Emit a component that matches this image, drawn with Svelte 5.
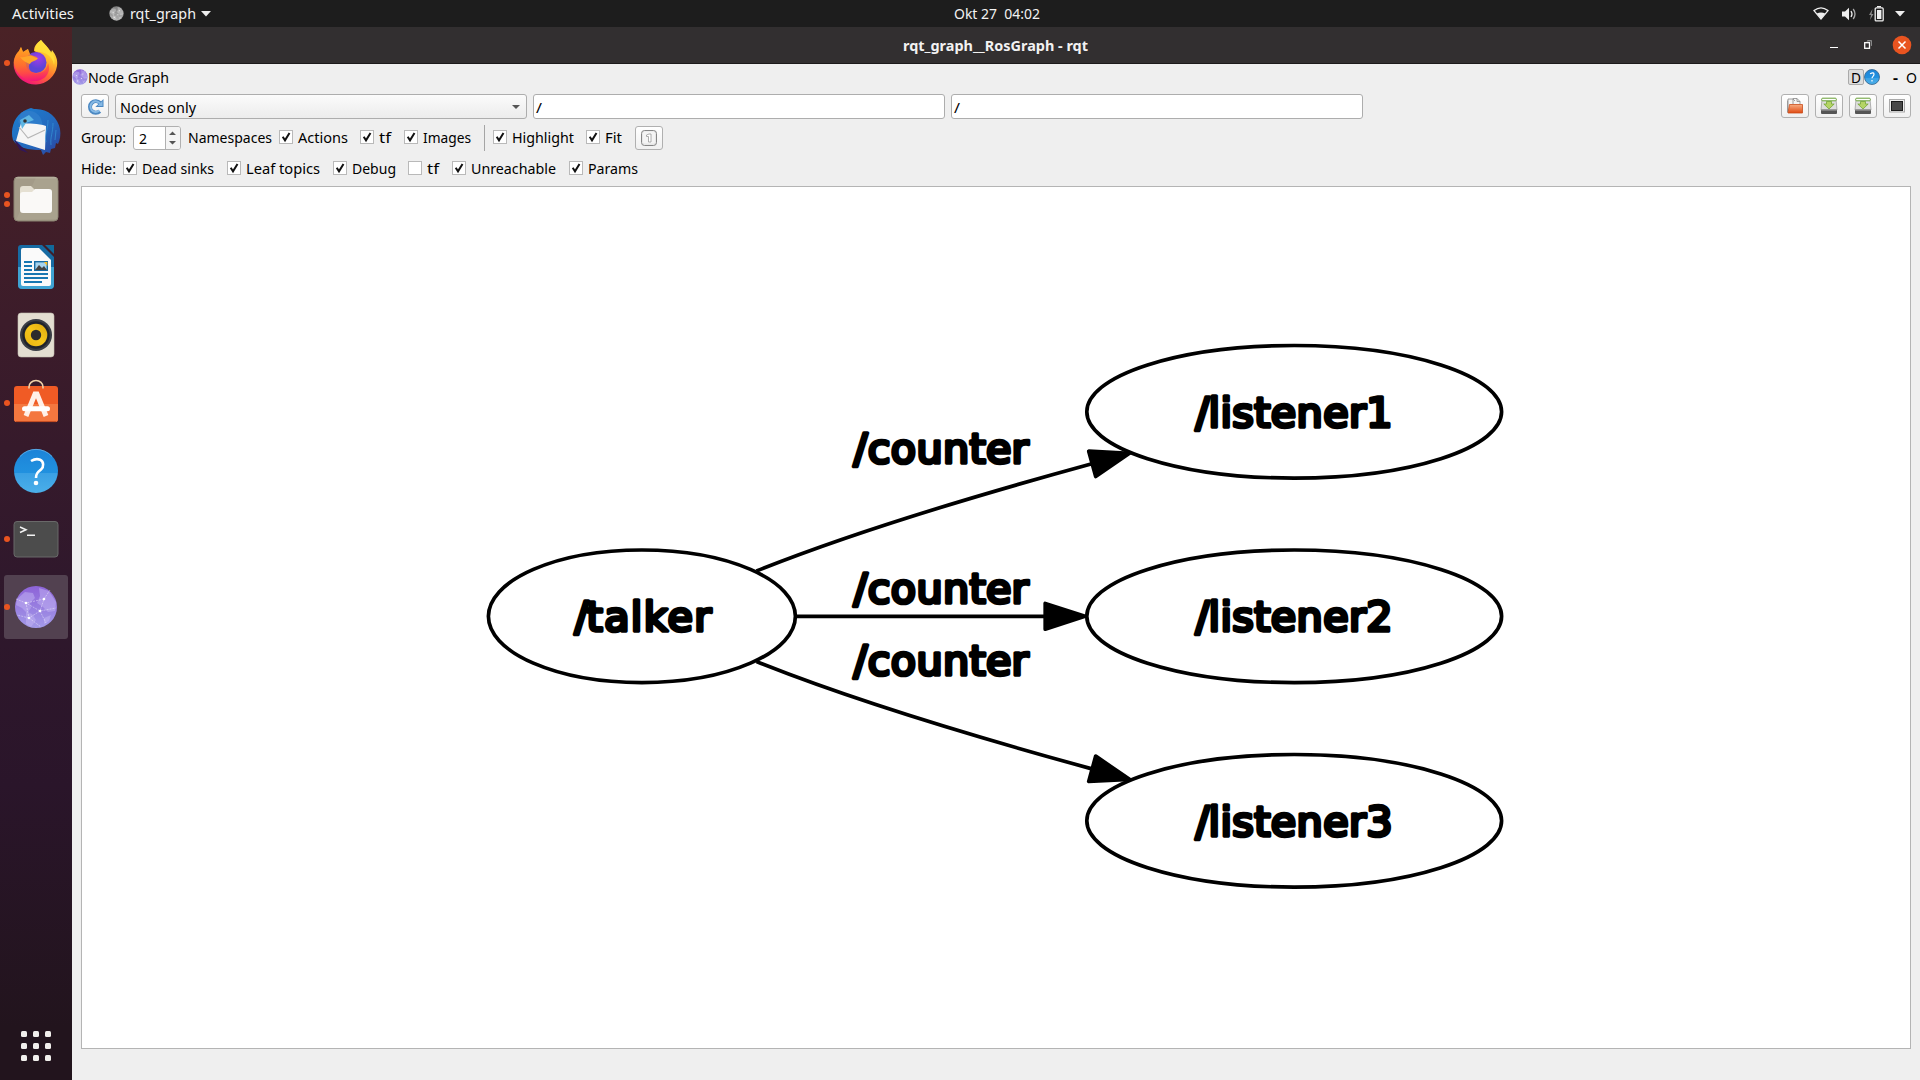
<script>
  const groupRow = [
    { w: 50, label: 'Actions', on: true },
    { w: 12, label: 'tf', on: true },
    { w: 48, label: 'Images', on: true }
  ];
  const viewRow = [
    { w: 62, label: 'Highlight', on: true },
    { w: 17, label: 'Fit', on: true }
  ];
  const hideRow = [
    { w: 72, label: 'Dead sinks', on: true },
    { w: 74, label: 'Leaf topics', on: true },
    { w: 44, label: 'Debug', on: true },
    { w: 12, label: 'tf', on: false },
    { w: 85, label: 'Unreachable', on: true },
    { w: 50, label: 'Params', on: true }
  ];
  const dock = [
    { id: 'firefox', dots: 1 },
    { id: 'mail', dots: 0 },
    { id: 'files', dots: 2 },
    { id: 'writer', dots: 0 },
    { id: 'music', dots: 0 },
    { id: 'store', dots: 1 },
    { id: 'help', dots: 0 },
    { id: 'terminal', dots: 1 },
    { id: 'rqt', dots: 1, active: true }
  ];
  // Each name starts with a slash that sits tight against the first letter.
  const nodes = [
    { x: 641.9, y: 616.3, rx: 153.5, label: 'talker', slash: 574.6, tx: 586.6, len: 124.6 },
    { x: 1294.2, y: 411.8, rx: 207.4, label: 'listener1', slash: 1195.6, tx: 1208.6, len: 184 },
    { x: 1294.2, y: 616.3, rx: 207.4, label: 'listener2', slash: 1195.6, tx: 1208.6, len: 184 },
    { x: 1294.2, y: 820.8, rx: 207.4, label: 'listener3', slash: 1195.6, tx: 1208.6, len: 184 }
  ];
  const topics = [463, 603, 675];
</script>

{#snippet txt(label, w, extra = '')}
  <svg class="txt {extra}" width={w} height="20"><text x="0" y="15" textLength={w} lengthAdjust="spacingAndGlyphs">{label}</text></svg>
{/snippet}

{#snippet check(c)}
  <label class="check">
    <svg class="box" width="14" height="14"><rect x=".5" y=".5" width="13" height="13" fill="#fff" stroke="#b9b9b9" />{#if c.on}<path d="M3.7 6.8 L6 10.3 L10.5 3" fill="none" stroke="#111" stroke-width="2" />{/if}</svg>
    {@render txt(c.label, c.w)}
  </label>
{/snippet}

{#snippet globe(size, gray)}
  <svg width={size} height={size} viewBox="0 0 44 44" class:gray>
    <circle cx="22" cy="22" r="21" fill="url(#globe)" />
    <path d="M3 14l8-7 8 1 2 5-5 5 1 5-4 5-5-5-6-3zM25 3l10 3 7 11-1 9-7 1-5-5-6-4 3-7zM12 27l6 2 4 6-5 7-5-3zM30 33l7-3-2 6-5 3z" fill="#c4b6f4" opacity=".5" />
    <path d="M2 14L12 18 30 14 26 26 15 33 12 18 26 26 42 23M30 14L36 5M15 33L27 42M15 33L3 30M26 26L32 38" fill="none" stroke="#fff" stroke-width=".8" stroke-dasharray="2 1" opacity=".5" />
    <g fill="#fff"><circle cx="12" cy="18" r="1.3" /><circle cx="30" cy="14" r="1.3" /><circle cx="26" cy="26" r="1.3" /><circle cx="15" cy="33" r="1.3" /></g>
  </svg>
{/snippet}

{#snippet save()}
  <svg width="18" height="18" viewBox="0 0 18 18">
    <path d="M2 2h14l1 11H1z" fill="#dedede" stroke="#888" stroke-width=".6" />
    <rect x="1" y="12.5" width="16" height="4.5" rx="1" fill="#555" /><path d="M1.5 13h15" stroke="#aaa" />
    <rect x="1.7" y="1.2" width="14.6" height="2.6" rx="1" fill="#fff" stroke="#69a336" />
    <path d="M6.5 4.5h5V7h2.7L9 12 3.8 7h2.7z" fill="#b4d465" stroke="#6c9f2d" stroke-width=".7" />
  </svg>
{/snippet}

<svg class="defs" width="0" height="0">
  <defs>
    <linearGradient id="globe" x2="0" y2="1"><stop stop-color="#8d63d8" /><stop offset="1" stop-color="#a39ae8" /></linearGradient>
    <linearGradient id="ff" x1=".85" y1=".1" x2=".3" y2="1"><stop stop-color="#fff04a" /><stop offset=".3" stop-color="#ffb82b" /><stop offset=".62" stop-color="#ff6a33" /><stop offset="1" stop-color="#f3107c" /></linearGradient>
    <linearGradient id="ffo" x1=".3" x2=".5" y2="1"><stop stop-color="#ffa61e" /><stop offset=".5" stop-color="#ff7529" /><stop offset=".75" stop-color="#ff4a45" /><stop offset="1" stop-color="#f3107c" /></linearGradient>
    <radialGradient id="ffp" cx=".6" cy=".3"><stop stop-color="#a23ce8" /><stop offset="1" stop-color="#5b45d6" /></radialGradient>
    <linearGradient id="tb" x2="1" y2="1"><stop stop-color="#1c7fd0" /><stop offset=".6" stop-color="#2468bd" /><stop offset="1" stop-color="#2c3f9b" /></linearGradient>
    <linearGradient id="blue" x2="0" y2="1"><stop stop-color="#1c83d8" /><stop offset=".54" stop-color="#2191df" /><stop offset=".55" stop-color="#3aa0e4" /><stop offset="1" stop-color="#4bafe9" /></linearGradient>
    <linearGradient id="yellow" x1="1" x2="0" y2="1"><stop stop-color="#dca90c" /><stop offset=".5" stop-color="#f5c61b" /><stop offset="1" stop-color="#e7b411" /></linearGradient>
    <linearGradient id="folder" x2="0" y2="1"><stop stop-color="#f7ad83" /><stop offset="1" stop-color="#e04a12" /></linearGradient>
  </defs>
</svg>

<div class="desktop">
  <header class="panel">
    <div class="left">
      {@render txt('Activities', 62)}
      <span class="app">{@render globe(15, true)}{@render txt('rqt_graph', 66)}<svg width="10" height="6"><path d="M0 0h10L5 5.5z" fill="#eee" /></svg></span>
    </div>
    <div class="clock">{@render txt('Okt 27\u00a0 04:02', 86)}</div>
    <div class="tray">
      <svg width="16" height="13" viewBox="0 0 16 13"><path d="M1 3.6Q8-2 15 3.6L8 12z" fill="none" stroke="#eee" stroke-width="1.3" /><path d="M3.8 6.5Q8 4.5 12.2 6.5L8 12z" fill="#eee" /></svg>
      <svg class="vol" width="15" height="14" viewBox="0 0 15 14"><path d="M0 4.5h3L7 .8v12.4l-4-3.7H0z" fill="#eee" /><path d="M9 4q2 3 0 6" fill="none" stroke="#eee" stroke-width="1.3" /><path d="M11.2 2q3.6 5 0 10" fill="none" stroke="#aaa" stroke-width="1.3" /></svg>
      <svg class="bat" width="15" height="16" viewBox="0 0 15 16"><path d="M3.5 3L0 9h2l-1 5 3.5-6h-2z" fill="#888" /><path d="M8 .5h4" stroke="#eee" stroke-width="1.5" /><rect x="6.2" y="1.9" width="8" height="13" rx="1" fill="none" stroke="#eee" stroke-width="1.3" /><rect x="8" y="4" width="4.4" height="9" fill="#eee" /></svg>
      <svg class="tri" width="10" height="6"><path d="M0 0h10L5 5.5z" fill="#eee" /></svg>
    </div>
  </header>

  <div class="body">
    <nav class="dock">
      {#each dock as d}
        <div class="tile" class:active={d.active}>
          <div class="dots">{#each Array(d.dots) as _}<i></i>{/each}</div>
          {#if d.id === 'firefox'}
            <svg width="48" height="48" viewBox="0 0 48 48">
              <path d="M29 1c2 3 5 5 7 8l3 5 1-3c4 5 6 10 5 16a22 22 0 0 1-43 2C1 22 3 16 7 12l2-4 2 5 5-3 2 5h10l-6-3C22 7 25 4 29 1z" fill="url(#ff)" />
              <circle cx="24" cy="23.5" r="10.5" fill="url(#ffp)" />
              <path d="M2 25C1 20 4 15 7 12l2-4 2 5 5-3c0 3 1 5 3 6l6 2c-1 3-5 3-7 6-4 6 3 12 9 10 6-1 8-5 9-10 4 10-4 18-13 18C12 42 4 35 2 25z" fill="url(#ffo)" opacity=".8" />
              <path d="M8 18c5 1 8-2 12-1 3 1 4 2 6 2-2 4-6 2-8 6-3-1-7-3-10-7z" fill="#ffa629" />
              <path d="M29 1c2 3 5 5 7 8 5 5 8 11 6 17-1-5-3-8-6-10-4-3-8-3-13-4 0-5 2-8 6-11z" fill="#ffdf3a" opacity=".85" />
            </svg>
          {:else if d.id === 'mail'}
            <svg class="mail" width="48" height="48" viewBox="0 0 48 48">
              <path d="M9 5C13 2 16 1 19 0l3 1c13-1 24 8 26 20 1 6 0 11-2 15l-2-1-1 5-4 1-1 4-4-1-3 3-2-5C16 42 6 40 1 32-2 22 2 10 9 5z" fill="url(#tb)" />
              <path d="M9 5C17 0 28 4 30 14c2 8-2 14-4 20L6 14z" fill="#2d7ccb" />
              <path d="M4 33l12 12-8-3-6-10z" fill="#31165a" />
              <path d="M9 15C17 16 26 15 34 18l-1 24L4 33z" fill="#f5f5f5" /><path d="M7 19l9 11 17-8" fill="none" stroke="#b5b5b5" stroke-width="1.1" />
              <path d="M8 12l2 9 4-6 8-3-5-5z" fill="#5eb6e3" /><circle cx="13" cy="13" r="1.8" fill="#333" />
              <path d="M36 12c0 10-4 15-2 22M41 15c0 10-3 14-2 22M44 22l-1 10" stroke="#399ddc" fill="none" opacity=".6" />
            </svg>
          {:else if d.id === 'files'}
            <svg width="48" height="48" viewBox="0 0 48 48"><rect x="2" y="2" width="44" height="44" rx="4" fill="#a39b88" stroke="#8b8473" /><path d="M24 2.5h20a2 2 0 0 1 1.5 1.5v40L4 45z" fill="#aea692" opacity=".6" /><path d="M4 2.8h40" stroke="#c0b9a9" /><path d="M8 14a3 3 0 0 1 3-3h8l4 4h14v8H8z" fill="#e5e0d2" /><path d="M8 20a3 3 0 0 1 3-3h9l3-3h14a3 3 0 0 1 3 3v18a3 3 0 0 1-3 3H11a3 3 0 0 1-3-3z" fill="#faf9f7" /></svg>
          {:else if d.id === 'writer'}
            <svg width="48" height="48" viewBox="0 0 48 48"><path d="M9 2h21l12 12v28a4 4 0 0 1-4 4H10a4 4 0 0 1-4-4V5a3 3 0 0 1 3-3z" fill="#176ba3" /><path d="M6 24h36v18a4 4 0 0 1-4 4H10a4 4 0 0 1-4-4z" fill="#3fa3d3" /><path d="M11 5h16l12 12v24a2 2 0 0 1-2 2H11a2 2 0 0 1-2-2V7a2 2 0 0 1 2-2z" fill="#fafafa" /><path d="M33 2h9v9z" fill="#11699b" /><path d="M12 19h8M12 23h8M12 27h8M12 31h24M12 35h24M12 39h18" stroke="#1777b2" stroke-width="2" /><rect x="22.7" y="18.7" width="12.6" height="8.6" fill="#a7d4ef" stroke="#176ba3" stroke-width="1.4" /><path d="M23 27l4-5 3 3 2-2 3 4z" fill="#444" /><path d="M32 19h3.3v4z" fill="#fdbd20" /></svg>
          {:else if d.id === 'music'}
            <svg width="48" height="48" viewBox="0 0 48 48"><rect x="6" y="2" width="36" height="44" rx="3" fill="#e3ded1" stroke="#c5c0b4" stroke-width=".6" /><circle cx="24" cy="24" r="16" fill="#3a3e45" /><circle cx="24" cy="24" r="13.7" fill="#20242b" /><circle cx="24" cy="24" r="11.3" fill="url(#yellow)" /><circle cx="24" cy="24" r="5.2" fill="#2c2c2c" /></svg>
          {:else if d.id === 'store'}
            <svg class="store" width="48" height="48" viewBox="0 0 48 48"><rect x="2" y="8" width="44" height="36" rx="3" fill="#f05b25" /><path d="M2 26h44v15a3 3 0 0 1-3 3H5a3 3 0 0 1-3-3z" fill="#f4773f" /><path d="M4 43.6h40" stroke="#c14a21" /><path d="M17 10.500V9a7 6.500 0 0 1 14 0v1.500" fill="none" stroke="#f1d2a8" stroke-width="1.600" /><path d="M14 38L23 16h2l9 22" fill="none" stroke="#fff0e8" stroke-width="5" /><path d="M12.500 30.800h23" stroke="#fff" stroke-width="5" stroke-linecap="round" /></svg>
          {:else if d.id === 'help'}
            <svg width="48" height="48" viewBox="0 0 48 48"><circle cx="24" cy="24" r="22" fill="url(#blue)" /><path d="M8 9.500a21.500 21.500 0 0 1 32 0" fill="none" stroke="#66b2ea" stroke-width=".8" /><path d="M19 14q5-3 9-1.300c4 2 4 7 1 9.800-3 2.500-5 4-5 8.500" fill="none" stroke="#fff" stroke-width="2.600" /><circle cx="24" cy="36" r="2.300" fill="#fff" /></svg>
          {:else if d.id === 'terminal'}
            <svg width="48" height="48" viewBox="0 0 48 48"><rect x="2" y="6.500" width="44" height="35.500" rx="3" fill="#4c4c4c" stroke="#696969" /><path d="M8 12l6 2.800L8 17.500M15 20.300h8" fill="none" stroke="#f3f3f3" stroke-width="1.500" /></svg>
          {:else}
            {@render globe(44, false)}
          {/if}
        </div>
      {/each}
      <svg class="grid" width="30" height="30">
        {#each [0, 12, 24] as y}{#each [0, 12, 24] as x}<rect {x} {y} width="6" height="6" rx="1.500" fill="#f1efec" />{/each}{/each}
      </svg>
    </nav>

    <main class="window">
      <div class="titlebar">
        <div class="title">{@render txt('rqt_graph__RosGraph - rqt', 185, 'bold')}</div>
        <svg class="controls" width="82" height="20" viewBox="0 0 82 20"><path d="M0 12.500h8" stroke="#fff" stroke-width="1" /><path d="M37 6.500V6h4.500v4.500H41M37.500 5.500h4v5" fill="none" stroke="#888" /><rect x="34.700" y="7.700" width="4.800" height="5.600" fill="none" stroke="#fff" stroke-width="1.300" /><circle cx="72" cy="10" r="9.300" fill="#e95420" /><path d="M68.500 6.500l7 7M75.500 6.500l-7 7" stroke="#fff" stroke-width="1.500" /></svg>
      </div>

      <div class="plugin">
        <div class="globe">{@render globe(16, false)}</div>{@render txt('Node Graph', 81)}
        <div class="pluginbtns">
          <span class="d">{@render txt('D', 10)}</span>
          <svg width="16" height="16" viewBox="0 0 16 16"><circle cx="8" cy="8" r="7.500" fill="url(#blue)" stroke="#32628c" stroke-width=".8" /><path d="M6 4.800q4-2 4 .5c0 2-2 2-2 4M8 11v1.500" fill="none" stroke="#fff" stroke-width="1.200" /></svg>
          <span class="dash">{@render txt('-', 5, 'bold')}</span>
          {@render txt('O', 11)}
        </div>
      </div>

      <div class="row tools">
        <button class="btn"><svg width="17" height="17" viewBox="0 0 17 17"><path d="M12.800 13.200A5.800 5.800 0 1 1 13 5" fill="none" stroke="#4b88c2" stroke-width="4" /><path d="M16.500 1v8H8.300z" fill="#4b88c2" /><path d="M12.300 12.600A5.300 5.300 0 1 1 13 5.500" fill="none" stroke="#86b9e5" stroke-width="2" /><path d="M15.500 3v5H10.500z" fill="#86b9e5" /></svg></button>
        <div class="combo">{@render txt('Nodes only', 76)}<svg width="8" height="4"><path d="M0 0h8L4 4z" fill="#555" /></svg></div>
        <div class="input">{@render txt('/', 6)}</div>
        <div class="input">{@render txt('/', 6)}</div>
        <div class="files">
          <button class="btn"><svg width="18" height="18" viewBox="0 0 18 18"><path d="M2 14V2h5l2 2M7 7V1.500h4l3 3V7" fill="#f4f4f4" stroke="#888" stroke-width=".8" /><path d="M11 1.500v3h3" fill="none" stroke="#888" stroke-width=".8" /><path d="M1.500 15.500V3.500" stroke="#999" /><path d="M3.500 7.500h13v8.500H2z" fill="url(#folder)" stroke="#c94d1b" stroke-width=".8" /></svg></button>
          <button class="btn">{@render save()}</button>
          <button class="btn">{@render save()}</button>
          <button class="btn"><svg width="18" height="16" viewBox="0 0 18 16"><rect x="1.500" y="1.500" width="15" height="12.500" fill="#eee" stroke="#aaa" /><rect x="3.500" y="3.500" width="11" height="9" fill="#494949" stroke="#1d1d1d" /></svg></button>
        </div>
      </div>

      <div class="row group">
        {@render txt('Group:', 45)}
        <div class="spin"><span>{@render txt('2', 8)}</span><svg width="14" height="22"><path d="M3 8h7L6.500 4.500zM3 14h7l-3.500 3.500z" fill="#555" /></svg></div>
        {@render txt('Namespaces', 84)}
        <div class="checks">{#each groupRow as c}{@render check(c)}{/each}</div>
        <div class="sep"></div>
        <div class="checks">{#each viewRow as c}{@render check(c)}{/each}</div>
        <button class="btn one"><svg width="16" height="16" viewBox="0 0 16 16"><rect x=".5" y=".5" width="15" height="15" rx="3" fill="#e7e7e7" stroke="#858585" /><rect x="2" y="1.500" width="12" height="12" rx="2" fill="#f4f4f4" /><path d="M5.500 5L8 4h2v8H7.500V6.500h-2z" fill="#fff" stroke="#999" stroke-width=".8" /></svg></button>
      </div>

      <div class="row hide">
        {@render txt('Hide:', 35)}
        <div class="checks wide">{#each hideRow as c}{@render check(c)}{/each}</div>
      </div>

      <div class="canvas">
        <svg width="1829" height="862" viewBox="82 187 1829 862">
          <g fill="none" stroke="#000" stroke-width="3.690">
            <path d="M756.500 571C850 533.500 985 493 1091 464" />
            <path d="M795.400 616.300H1045" />
            <path d="M756.500 661.600C850 699.100 985 739.600 1091 768.600" />
            {#each nodes as n}<ellipse cx={n.x} cy={n.y} rx={n.rx} ry="66.300" />{/each}
          </g>
          <g stroke="#000" stroke-width="3.690" stroke-linejoin="round">
            <path d="M1088.700 451.200L1129.500 453.300 1095.700 476.500z" />
            <path d="M1045.200 603.400V629.200L1085 616.300z" />
            <path d="M1088.700 781.400L1129.500 779.300 1095.700 756.100z" />
          </g>
          <g class="gtext">
            {#each nodes as n}<text x={n.slash} y={n.y + 14.700}>/<tspan x={n.tx} textLength={n.len}>{n.label}</tspan></text>{/each}
            {#each topics as y}<text x="853.600" {y} textLength="175">/counter</text>{/each}
          </g>
        </svg>
      </div>
    </main>
  </div>
</div>

<style>
  :global(body) { margin: 0; overflow: hidden; }
  .desktop { width: 1920px; height: 1080px; display: flex; flex-direction: column; font-family: "Noto Sans", "Open Sans", sans-serif; background: #efefef; }
  .defs { position: absolute; }
  svg { display: block; flex: none; }
  .txt { overflow: visible; font-size: 14.600px; fill: #000; }
  .bold { font-weight: 700; }
  .gray { filter: grayscale(1) brightness(1.1); }
  .panel { height: 27px; background: #1d1d1d; display: grid; grid-template-columns: 1fr auto 1fr; align-items: center; }
  .panel .txt, .titlebar .txt { fill: #f2f2f2; }
  .left, .app, .tray { display: flex; align-items: center; }
  .left { padding-left: 12px; gap: 35px; }
  .app { gap: 5.500px; }
  .clock { padding-left: 74px; width: 86px; }
  .tray { justify-content: flex-end; padding-right: 15px; }
  .vol { margin-left: 13px; }
  .bat { margin-left: 12px; }
  .tri { margin-left: 11px; }
  .body { flex: 1; display: flex; min-height: 0; }
  .dock { width: 72px; background: linear-gradient(#4a2226, #3c1c2a 28%, #30182c 52%, #2a152a 72%, #22141d 95%); display: flex; flex-direction: column; align-items: center; gap: 4px; padding: 4px 0 19px; box-sizing: border-box; }
  .tile { width: 64px; height: 64px; border-radius: 3px; display: flex; align-items: center; justify-content: center; position: relative; }
  .tile.active { background: #524150; }
  .dots { position: absolute; left: 0; top: 0; bottom: 0; display: flex; flex-direction: column; justify-content: center; gap: 3px; }
  .dots i { width: 6px; height: 6px; border-radius: 50%; background: #e95420; }
  .grid { margin-top: auto; }
  .store { overflow: visible; margin-bottom: 2px; }
  .mail { margin-top: 2px; overflow: visible; }
  .window { flex: 1; display: flex; flex-direction: column; min-width: 0; background: #efefef; }
  .titlebar { height: 37px; box-sizing: border-box; border-bottom: 1px solid #1c1a1b; background: #322f30; display: flex; align-items: center; justify-content: space-between; padding: 0 8px 0 831px; }
  .title { padding-top: 1px; }
  .plugin { height: 30px; box-sizing: border-box; display: flex; align-items: center; padding: 0 3px 4px 0; }
  .plugin > .txt, .combo .txt, .input .txt { margin-top: 2px; }
  .pluginbtns { margin-left: auto; display: flex; align-items: center; }
  .d { width: 16px; height: 16px; box-sizing: border-box; border: 1px solid #aaa; border-radius: 2px; background: #ddd; display: flex; align-items: center; justify-content: center; }
  .pluginbtns .txt { margin-top: 2px; }
  .dash { margin: 0 8px 0 13px; }
  .row { display: flex; align-items: center; padding-left: 9px; }
  .tools { height: 25px; gap: 6px; align-items: flex-start; }
  .btn { width: 28px; height: 24px; box-sizing: border-box; padding: 0; border: 1px solid #b0b0b0; border-radius: 3px; background: linear-gradient(#fff, #f0f0f0); display: flex; align-items: center; justify-content: center; }
  .combo, .input { width: 412px; height: 25px; box-sizing: border-box; border: 1px solid #adadad; border-radius: 3px; display: flex; align-items: center; }
  .combo { background: linear-gradient(#fbfbfb, #ececec); justify-content: space-between; padding: 0 6px 0 4px; }
  .input { background: #fff; padding-left: 2px; }
  .files { margin-left: auto; display: flex; gap: 6px; padding-right: 9px; }
  .group { height: 26px; margin-top: 6px; }
  .spin { width: 48px; height: 24px; box-sizing: border-box; margin: 0 6.500px 0 7px; border: 1px solid #b0b0b0; border-radius: 3px; background: #fff; display: flex; overflow: hidden; }
  .spin span { width: 33px; padding: 2px 0 0 5px; box-sizing: border-box; border-right: 1px solid #b0b0b0; }
  .spin > svg { background: #f4f4f4; }
  .checks { display: flex; gap: 12.500px; margin-left: 7px; }
  .wide { gap: 12.800px; }
  .check { display: flex; align-items: center; gap: 5px; }
  .box { margin-top: -2px; }
  .sep { width: 1px; height: 26px; background: #a5a5a5; margin-left: 13px; }
  .sep + .checks { margin-left: 8px; }
  .one { margin-left: 13px; }
  .hide { height: 20px; margin-top: 8px; }
  .canvas { margin: 7px 9px 31px; flex: 1; border: 1px solid #b4b4b4; background: #fff; box-sizing: border-box; overflow: hidden; }
  .gtext { font: 41.300px "DejaVu Sans", sans-serif; fill: #000; stroke: #000; stroke-width: 3.690px; stroke-linejoin: round; }
</style>
